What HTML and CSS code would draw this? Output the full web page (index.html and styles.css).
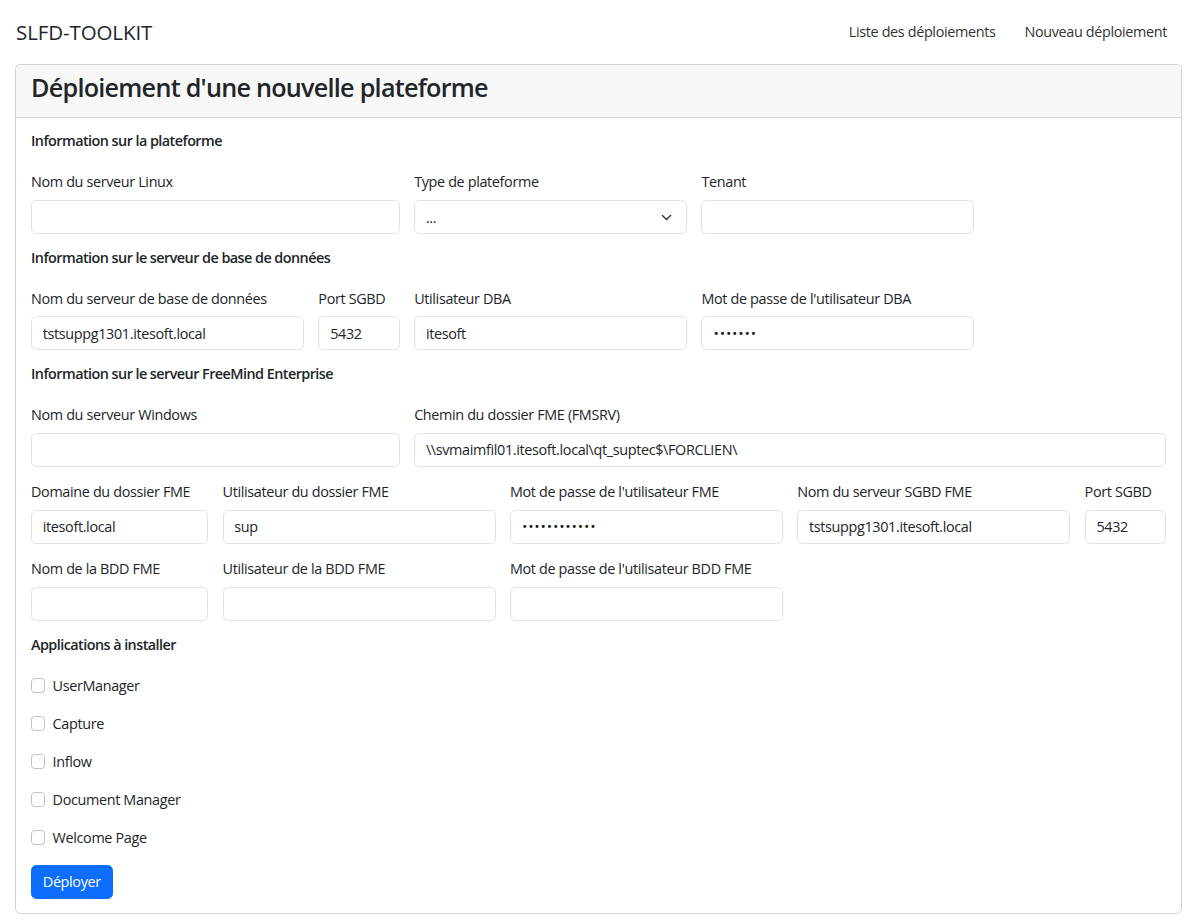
FILE: index.html
```html
<!DOCTYPE html>
<html lang="fr">
<head>
<meta charset="utf-8">
<title>SLFD-TOOLKIT</title>
<link rel="stylesheet" href="styles.css">
</head>
<body>
<nav class="navbar">
  <a class="brand" href="#">SLFD-TOOLKIT</a>
  <div class="nav-links">
    <a href="#">Liste des déploiements</a>
    <a href="#">Nouveau déploiement</a>
  </div>
</nav>
<main class="card">
  <div class="card-header"><h3>Déploiement d'une nouvelle plateforme</h3></div>
  <form class="card-body">
    <h6 class="section-title first">Information sur la plateforme</h6>
    <div class="grid">
      <div class="field span-4"><label>Nom du serveur Linux</label><input class="control" type="text"></div>
      <div class="field span-3"><label>Type de plateforme</label>
        <div class="select control"><span>...</span>
          <svg class="chev" viewBox="0 0 16 16" width="11" height="11"><path d="m2 5 6 6 6-6" fill="none" stroke="#343a40" stroke-width="2" stroke-linecap="round" stroke-linejoin="round"/></svg>
        </div>
      </div>
      <div class="field span-3"><label>Tenant</label><input class="control" type="text"></div>
    </div>

    <h6 class="section-title">Information sur le serveur de base de données</h6>
    <div class="grid">
      <div class="field span-3"><label>Nom du serveur de base de données</label><input class="control" type="text" value="tstsuppg1301.itesoft.local"></div>
      <div class="field span-1"><label>Port SGBD</label><input class="control" type="text" value="5432"></div>
      <div class="field span-3"><label>Utilisateur DBA</label><input class="control" type="text" value="itesoft"></div>
      <div class="field span-3"><label>Mot de passe de l'utilisateur DBA</label><input class="control" type="password" value="aaaaaaa"></div>
    </div>

    <h6 class="section-title">Information sur le serveur FreeMind Enterprise</h6>
    <div class="grid">
      <div class="field span-4"><label>Nom du serveur Windows</label><input class="control" type="text"></div>
      <div class="field span-8"><label>Chemin du dossier FME (FMSRV)</label><input class="control" type="text" value="\\svmaimfil01.itesoft.local\qt_suptec$\FORCLIEN\"></div>
      <div class="field span-2"><label>Domaine du dossier FME</label><input class="control" type="text" value="itesoft.local"></div>
      <div class="field span-3"><label>Utilisateur du dossier FME</label><input class="control" type="text" value="sup"></div>
      <div class="field span-3"><label>Mot de passe de l'utilisateur FME</label><input class="control" type="password" value="aaaaaaaaaaaa"></div>
      <div class="field span-3"><label>Nom du serveur SGBD FME</label><input class="control" type="text" value="tstsuppg1301.itesoft.local"></div>
      <div class="field span-1"><label>Port SGBD</label><input class="control" type="text" value="5432"></div>
      <div class="field span-2"><label>Nom de la BDD FME</label><input class="control" type="text"></div>
      <div class="field span-3"><label>Utilisateur de la BDD FME</label><input class="control" type="text"></div>
      <div class="field span-3"><label>Mot de passe de l'utilisateur BDD FME</label><input class="control" type="password"></div>
    </div>

    <h6 class="section-title">Applications à installer</h6>
    <div class="checks">
      <label class="check"><span class="box"></span>UserManager</label>
      <label class="check"><span class="box"></span>Capture</label>
      <label class="check"><span class="box"></span>Inflow</label>
      <label class="check"><span class="box"></span>Document Manager</label>
      <label class="check"><span class="box"></span>Welcome Page</label>
    </div>
    <button class="btn" type="button">Déployer</button>
  </form>
</main>
</body>
</html>
```

FILE: styles.css
```css
* { box-sizing: border-box; }
html, body { margin: 0; padding: 0; }
body {
  font-family: "Open Sans", "Noto Sans", sans-serif;
  font-size: 14.4px;
  line-height: 1.5;
  color: #212529;
  background: #fff;
  letter-spacing: -0.35px;
}
.navbar {
  display: flex;
  align-items: center;
  justify-content: space-between;
  height: 64px;
  padding: 0 31px 0 16px;
}
.brand {
  font-size: 20.5px;
  color: #212529;
  text-decoration: none;
  letter-spacing: -0.1px;
}
.nav-links { display: flex; gap: 29px; }
.nav-links a {
  color: #333;
  text-decoration: none;
}
.card {
  margin: 0 16px 0 15px;
  border: 1px solid #d3d3d3;
  border-radius: 5.4px;
  display: block;
}
.card-header {
  background: #f7f7f7;
  border-bottom: 1px solid #d3d3d3;
  border-radius: 5px 5px 0 0;
  padding: 7.2px 15px 14.6px;
}
.card-header h3 {
  margin: 0;
  font-size: 25.2px;
  font-weight: 600;
  line-height: 1.2;
  letter-spacing: -0.75px;
}
.card-body {
  padding: 14.4px 15px 14.4px;
  display: block;
}
.section-title {
  margin: 14.4px 0 21.6px;
  font-size: 14.4px;
  font-weight: 600;
  line-height: 1.2;
  letter-spacing: -0.55px;
}
.section-title.first { margin-top: 0; }
.grid {
  display: grid;
  grid-template-columns: repeat(12, 1fr);
  column-gap: 14.4px;
  row-gap: 14.4px;
}
.span-1 { grid-column: span 1; }
.span-2 { grid-column: span 2; }
.span-3 { grid-column: span 3; }
.span-4 { grid-column: span 4; }
.span-8 { grid-column: span 8; }
.field { display: flex; flex-direction: column; min-width: 0; }
.field label {
  margin-bottom: 7.2px;
  line-height: 21.6px;
  white-space: nowrap;
}
.control {
  display: block;
  width: 100%;
  height: 34.2px;
  padding: 5.4px 10.8px;
  font: inherit;
  letter-spacing: inherit;
  color: #212529;
  background: #fff;
  border: 1px solid #dee2e6;
  border-radius: 5.4px;
  outline: none;
}
input[type=password].control { letter-spacing: 0.3px; font-family: "DejaVu Sans", sans-serif; font-size: 10px; color: #111; }
.select {
  display: flex;
  align-items: center;
  justify-content: space-between;
}
.select span { line-height: 1; padding-top: 3px; }
.chev { margin-right: 3px; }
.checks { display: flex; flex-direction: column; }
.check {
  display: flex;
  align-items: center;
  min-height: 21.6px;
  margin-bottom: 16.4px;
  line-height: 21.6px;
}
.box {
  width: 14.4px;
  height: 14.4px;
  border: 1px solid #c0c0c0;
  border-radius: 3.6px;
  margin-right: 7.2px;
  background: #fff;
}
.btn {
  display: inline-block;
  height: 34.2px;
  padding: 0 10.8px;
  font: inherit;
  letter-spacing: inherit;
  color: #fff;
  background: #0d6efd;
  border: 1px solid #0d6efd;
  border-radius: 5.4px;
}
```
